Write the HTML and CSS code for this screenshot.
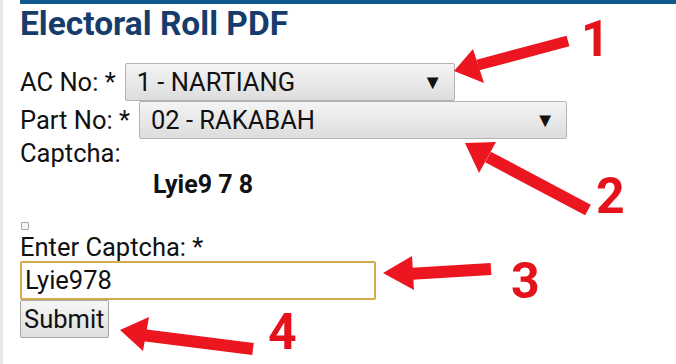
FILE: index.html
```html
<!DOCTYPE html>
<html>
<head>
<meta charset="utf-8">
<link rel="stylesheet" href="styles.css">
</head>
<body>
<div class="page">
  <div class="content">
    <h1 class="title">Electoral Roll PDF</h1>
    <div class="row"><span class="label">AC No: *</span><span class="select sel-ac"><span>1 - NARTIANG</span><span class="caret">▼</span></span></div>
    <div class="row"><span class="label">Part No: *</span><span class="select sel-part"><span>02 - RAKABAH</span><span class="caret">▼</span></span></div>
    <div class="line">Captcha:</div>
    <div class="captcha">Lyie9 7 8</div>
    <div class="chk"><span class="box"></span></div>
    <div class="line line-enter">Enter Captcha: *</div>
    <div class="input">Lyie978</div>
    <div class="btn">Submit</div>
  </div>
  <svg class="annot" width="676" height="364" viewBox="0 0 676 364">
    <g fill="#ec1620" stroke="none">
      <line x1="568" y1="41" x2="478" y2="65" stroke="#ec1620" stroke-width="11"/>
      <polygon points="454,71 473,49 484,83"/>
      <line x1="488" y1="157" x2="588" y2="210" stroke="#ec1620" stroke-width="12"/>
      <polygon points="465,143 496,142 479,173"/>
      <line x1="408" y1="274" x2="491" y2="269" stroke="#ec1620" stroke-width="12"/>
      <polygon points="383,273 412,256 414,290"/>
      <line x1="142" y1="335" x2="253" y2="349" stroke="#ec1620" stroke-width="12"/>
      <polygon points="120,330 149,317 143,351"/>
    </g>
    <g class="num" fill="#e3121b">
      <text x="581" y="56">1</text>
      <text x="596" y="213">2</text>
      <text x="511" y="298">3</text>
      <text x="268" y="349">4</text>
    </g>
  </svg>
</div>
</body>
</html>
```
FILE: styles.css
```css
html, body {
  margin: 0;
  padding: 0;
  background: #ffffff;
}
.page {
  position: relative;
  width: 676px;
  height: 364px;
  overflow: hidden;
  border-left: 3px solid #e7e7e3;
  box-sizing: border-box;
  padding-left: 17px;
  font-family: Roboto, "Liberation Sans", sans-serif;
  color: #111111;
}
.content {
  border-top: 4px solid #0f5a8c;
}
.title {
  margin: 0;
  padding-top: 2px;
  height: 57px;
  font-size: 33.5px;
  font-weight: 700;
  line-height: 36px;
  color: #163c6b;
}
.row {
  display: flex;
  align-items: center;
  height: 38px;
  font-size: 25.5px;
}
.label {
  margin-right: 9px;
}
.select {
  box-sizing: border-box;
  height: 38px;
  display: flex;
  align-items: center;
  justify-content: space-between;
  padding: 0 11px 0 11px;
  border: 1px solid #b3b3b3;
  border-radius: 2px;
  background: linear-gradient(#f4f4f4, #dddddd);
  font-size: 25.5px;
}
.sel-ac { width: 330px; }
.sel-part { width: 428px; }
.caret {
  font-size: 20px;
  color: #111;
}
.line {
  font-size: 25.5px;
  line-height: 28px;
  margin-top: 0;
}
.captcha {
  padding-left: 133px;
  font-size: 25px;
  font-weight: 700;
  line-height: 30px;
  margin-top: 3px;
}
.chk {
  height: 34px;
  display: flex;
  align-items: flex-end;
  padding-left: 1px;
  padding-bottom: 4px;
  box-sizing: border-box;
}
.box {
  width: 6px;
  height: 6px;
  border: 1px solid #a8a8a8;
  border-radius: 1px;
  background: #f4f4f4;
}
.line-enter {
  line-height: 27px;
}
.input {
  box-sizing: border-box;
  width: 356px;
  height: 39px;
  border: 2px solid #d3ab4a;
  border-radius: 2px;
  padding-left: 3px;
  font-size: 25.5px;
  line-height: 34px;
}
.btn {
  box-sizing: border-box;
  width: 89px;
  height: 38px;
  border: 1px solid #a6a6a6;
  border-radius: 2px;
  background: linear-gradient(#f6f6f6, #dedede);
  font-size: 25.5px;
  line-height: 36px;
  padding-left: 3px;
}
.annot {
  position: absolute;
  left: -3px;
  top: 0;
}
.num text {
  font-family: Roboto, "Liberation Sans", sans-serif;
  font-weight: 700;
  font-size: 50px;
}
```
